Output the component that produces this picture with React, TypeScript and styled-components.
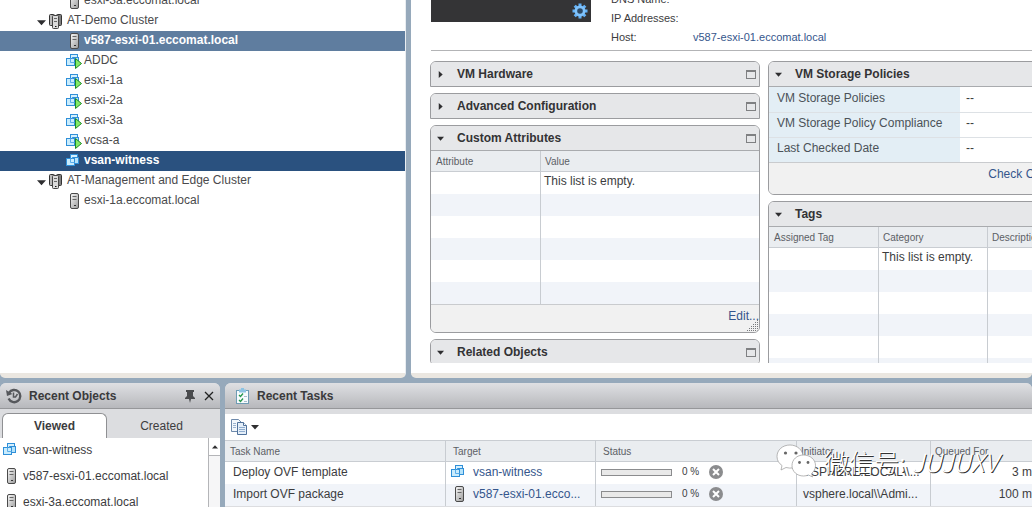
import React from "react";
import styled, { createGlobalStyle, css } from "styled-components";

const GlobalStyle = createGlobalStyle`
  *, *::before, *::after { box-sizing: border-box; }
  body {
    margin: 0;
    background: #96a9bb;
    color: #3c3c3e;
    font-family: "Liberation Sans", Arial, sans-serif;
    font-size: 12px;
    line-height: 20px;
  }
  button { font: inherit; color: inherit; background: none; border: 0; padding: 0; margin: 0; }
  ul, dl, dd, h2 { margin: 0; padding: 0; list-style: none; }
  h2 { font: inherit; }
  a { color: #35568c; text-decoration: none; }
`;

/* ---------- icons ---------- */

const HostIcon = () => (
  <svg width="16" height="16" viewBox="0 0 16 16" aria-hidden="true">
    <defs>
      <linearGradient id="hostBody" x1="0" x2="1" y1="0" y2="1">
        <stop offset="0" stopColor="#fafafa" />
        <stop offset="1" stopColor="#9a9a9a" />
      </linearGradient>
    </defs>
    <rect x="4.5" y="0.5" width="8" height="15" rx="1.5" fill="url(#hostBody)" stroke="#4a4a4a" />
    <path d="M6.500 3.500h4M6.500 6.500h4" stroke="#666" />
    <path d="M8 12.500h2" stroke="#333" />
  </svg>
);

const ClusterIcon = () => (
  <svg width="16" height="16" viewBox="0 0 16 16" aria-hidden="true">
    <rect x="0.5" y="1.5" width="5" height="11" rx="1" fill="#b9b9b9" stroke="#333" />
    <rect x="7.5" y="1.5" width="5" height="11" rx="1" fill="#808080" stroke="#333" />
    <rect x="3.5" y="2.5" width="6" height="13" rx="1" fill="#dadada" stroke="#444" />
    <path d="M5 5.500h3M5 8.500h3" stroke="#666" />
    <path d="M6 13.500h1.500" stroke="#111" />
  </svg>
);

const VmIcon = ({ running = false }: { running?: boolean }) => (
  <svg width="16" height="16" viewBox="0 0 16 16" aria-hidden="true">
    <rect x="4.5" y="1.5" width="7" height="8" fill="#d4effd" stroke="#2f8fd8" />
    <rect x="6.500" y="4.5" width="6" height="6" fill="#b4e2fa" stroke="#2f8fd8" />
    <rect x="0.5" y="5.5" width="8" height="7" fill="#c9ecfd" stroke="#2f8fd8" />
    <path d="M4.500 5.500v4h4M6.500 5.500v-1" fill="none" stroke="#5badea" />
    {running && <path d="M9.500 5.500v10l6-5z" fill="#83ea66" stroke="#1d8a26" strokeLinejoin="round" />}
  </svg>
);

const GearIcon = () => (
  <svg width="16" height="16" viewBox="0 0 16 16" aria-hidden="true">
    <g stroke="#63b1f7" strokeWidth="3">
      <path d="M8 0.5v15M0.5 8h15M2.7 2.7l10.6 10.6M13.3 2.7L2.7 13.3" />
    </g>
    <circle cx="8" cy="8" r="5.5" fill="#7fc2fb" />
    <circle cx="8" cy="8" r="2.8" fill="#2d4965" />
  </svg>
);

const HistoryIcon = () => (
  <svg width="16" height="16" viewBox="0 0 16 16" fill="none" stroke="#56585c" aria-hidden="true">
    <path d="M3 4.8A6.1 6.1 0 1 1 2.6 10.6" strokeWidth="2.4" />
    <path d="M0 2l1 6 5.5-2z" fill="#56585c" stroke="none" />
    <path d="M7.500 4.500v4.500h2l2-3" strokeWidth="1.5" />
  </svg>
);

const PinIcon = () => (
  <svg width="10" height="14" viewBox="0 0 10 14" aria-hidden="true">
    <path d="M1 1h8v2H8v4l2 2v1H6l-1 4-1-4H0V9l2-2V3H1z" fill="#4a4b4e" />
  </svg>
);

const CloseIcon = () => (
  <svg width="10" height="10" viewBox="0 0 10 10" aria-hidden="true">
    <path d="M1 1l8 8M9 1L1 9" stroke="#222" strokeWidth="1.3" />
  </svg>
);

const TasksIcon = () => (
  <svg width="14" height="16" viewBox="0 0 14 16" aria-hidden="true">
    <rect x="0.5" y="2.5" width="12" height="13" fill="#f7fbfd" stroke="#6f9cb4" />
    <path d="M3 4.500h7v-3H8V0H5v1.500H3z" fill="#8dc3e2" />
    <path d="M3 7l1.500 1.500L7 5.500M3 12l1.500 1.500L7 10.500" fill="none" stroke="#23974a" strokeWidth="1.300" />
    <path d="M8 8.500h3M8 13.500h3" stroke="#a9bccb" />
  </svg>
);

const CopyIcon = () => (
  <svg width="17" height="16" viewBox="0 0 17 16" aria-hidden="true">
    <path d="M0.500 0.500h7l3 3v9h-10z" fill="#f2f7fc" stroke="#6d89ab" />
    <path d="M2 4.500h3M2 6.500h3M2 8.500h3" stroke="#9bb3cf" />
    <path d="M6.500 3.500h6l3 3v9h-9z" fill="#e4eef8" stroke="#4f719b" />
    <path d="M12.500 3.500v3h3" fill="#fff" stroke="#4f719b" />
    <path d="M8 8.500h6M8 10.500h6M8 12.500h6" stroke="#8facce" />
  </svg>
);

const CancelIcon = () => (
  <svg width="14" height="14" viewBox="0 0 14 14" aria-hidden="true">
    <circle cx="7" cy="7" r="7" fill="#8b8c8e" />
    <path d="M4 4l6 6M10 4l-6 6" stroke="#fff" strokeWidth="2" />
  </svg>
);

const Arrow = ({ dir, size = 7 }: { dir: "down" | "right" | "up"; size?: number }) => {
  const shapes = { down: "M0 2h8L4 6.500z", right: "M2 0v8L6.500 4z", up: "M0 6h8L4 1.500z" };
  return (
    <svg width={size} height={size} viewBox="0 0 8 8" aria-hidden="true">
      <path d={shapes[dir]} fill="#2e2e30" />
    </svg>
  );
};

const ResizeGrip = () => (
  <svg width="12" height="12" viewBox="0 0 12 12" aria-hidden="true">
    <g stroke="#77797c" strokeDasharray="1 1">
      <path d="M10 1.500h2M8 3.500h4M6 5.500h6M4 7.500h8M2 9.500h10M0 11.500h12" />
    </g>
  </svg>
);

/* ---------- frame ---------- */

const Shell = styled.div`
  display: flex;
  flex-direction: column;
  gap: 5px;
  height: 100vh;
  overflow: hidden;
`;

const Workspace = styled.div`
  flex: 1;
  min-height: 0;
  display: flex;
  gap: 5px;
`;

const pane = css`
  background: #fff;
  border-bottom: 5px solid #ebe7e1;
  border-radius: 0 0 5px 5px;
  overflow: hidden;
`;

const Navigator = styled.nav`
  ${pane}
  flex: 0 0 406px;
  border-right: 1px solid #e9edf1;
`;

/* The tree is scrolled, so its first row is partly out of view. */
const Tree = styled.ul`
  margin-top: -9px;
`;

const TreeRow = styled.li<{ $depth: number; $tone?: "related" | "selected" }>`
  display: flex;
  align-items: center;
  height: 20px;
  gap: 2px;
  padding-left: ${(p) => (p.$depth === 1 ? 37 : 66)}px;
  color: #4a4a4c;
  ${(p) =>
    p.$tone &&
    css`
      color: #fff;
      font-weight: bold;
      background: ${p.$tone === "selected" ? "#2a517f" : "#5f7d9f"};
    `}
`;

const Twisty = styled.button`
  display: flex;
  width: 10px;
  padding-top: 3px;
`;

const NodeName = styled.span`
  padding-bottom: 2px;
`;

const Main = styled.main`
  ${pane}
  flex: 1;
  min-width: 0;
  padding: 0 0 10px 19px;
  display: flex;
`;

const MainScroll = styled.div`
  flex: 1;
  min-width: 0;
  overflow: hidden;
`;

const Summary = styled.section`
  display: flex;
  gap: 20px;
  margin: -11px 0 10px 1px;
  padding-bottom: 4px;
  border-bottom: 1px solid #b3b4b6;
  font-size: 11px;
`;

const Console = styled.div`
  display: flex;
  align-items: flex-end;
  justify-content: flex-end;
  width: 160px;
  height: 33px;
  padding: 3px;
  background: #343436;
`;

const Facts = styled.dl`
  display: grid;
  grid-template-columns: 82px auto;
  grid-auto-rows: 19px;
  line-height: 20px;
`;

const Columns = styled.div`
  display: grid;
  grid-template-columns: repeat(2, minmax(330px, 1fr));
  align-items: start;
  gap: 8px;
`;

const Column = styled.div`
  display: flex;
  flex-direction: column;
  gap: 6px;
`;

/* ---------- portlets ---------- */

const Card = styled.section<{ $open: boolean }>`
  border: 1px solid #9b9c9f;
  border-radius: ${(p) => (p.$open ? "6px" : "6px 6px 0 0")};
  overflow: hidden;
  background: #fff;
`;

const CardHead = styled.h2<{ $open: boolean }>`
  display: flex;
  align-items: center;
  justify-content: space-between;
  height: ${(p) => (p.$open ? 25 : 24)}px;
  padding: 0 3px 0 6px;
  background: #e6e7e9;
  border-bottom: ${(p) => (p.$open ? "1px solid #a9abae" : "0")};
`;

const Toggle = styled.button`
  display: flex;
  align-items: center;
  gap: 13px;
  color: #333335;
  font-weight: bold;
`;

const Maximize = styled.button`
  width: 10px;
  height: 9px;
  border: 1px solid #7f8082;
  border-top-width: 2px;
`;

const CardFoot = styled.footer<{ $tall?: boolean }>`
  display: flex;
  justify-content: flex-end;
  position: relative;
  height: ${(p) => (p.$tall ? 32 : 28)}px;
  padding: 1px ${(p) => (p.$tall ? 8 : 0)}px 0;
  background: #f1f1f1;
  border-top: 1px solid #c9cbce;
`;

const Grip = styled.span`
  position: absolute;
  right: 0;
  bottom: 1px;
  line-height: 0;
`;

const Grid = styled.table`
  width: 100%;
  table-layout: fixed;
  border-collapse: separate;
  border-spacing: 0;

  th {
    height: 21px;
    padding: 2px 5px 0;
    font-size: 10px;
    font-weight: normal;
    line-height: 18px;
    text-align: left;
    color: #5c6065;
    background: #eaedf0;
    border-bottom: 1px solid #c9cdd2;
    overflow: hidden;
  }
  td {
    height: 22px;
    padding: 0 3px 4px;
    line-height: 18px;
    white-space: nowrap;
  }
  th + th, td + td { border-left: 1px solid #c8ccd1; }
  th + th { padding-left: 4px; }
  tbody tr:nth-child(even) { background: #f1f4f9; }
`;

const Policies = styled.table`
  width: 100%;
  border-collapse: collapse;

  tr + tr { border-top: 1px solid #dde1e5; }
  th {
    width: 191px;
    height: 25px;
    padding: 0 8px 3px;
    text-align: left;
    font-weight: normal;
    color: #4b5258;
    background: #e3eef5;
  }
  td { padding: 0 6px 3px; }
`;

const Portlet = ({ title, open = false, children }: { title: string; open?: boolean; children?: React.ReactNode }) => (
  <Card $open={open}>
    <CardHead $open={open}>
      <Toggle type="button" aria-expanded={open}>
        <Arrow dir={open ? "down" : "right"} />
        {title}
      </Toggle>
      <Maximize type="button" aria-label={`Maximize ${title}`} />
    </CardHead>
    {children}
  </Card>
);

const EmptyGrid = ({ columns, rows }: { columns: string[]; rows: number }) => (
  <Grid>
    <colgroup>
      {columns.map((c, i) => (
        <col key={c} width={i < columns.length - 1 ? 109 : undefined} />
      ))}
    </colgroup>
    <thead>
      <tr>{columns.map((c) => <th key={c}>{c}</th>)}</tr>
    </thead>
    <tbody>
      {Array.from({ length: rows }, (_, r) => (
        <tr key={r}>
          {columns.map((c, i) => <td key={c}>{r === 0 && i === 1 ? "This list is empty." : ""}</td>)}
        </tr>
      ))}
    </tbody>
  </Grid>
);

/* ---------- bottom dock ---------- */

const Dock = styled.div`
  flex: 0 0 124px;
  min-height: 0;
  display: flex;
  gap: 5px;
`;

const DockPanel = styled.section<{ $width?: number }>`
  flex: ${(p) => (p.$width ? `0 0 ${p.$width}px` : "1")};
  min-width: 0;
  display: flex;
  flex-direction: column;
  background: #dcdde0;
  border-radius: 6px 6px 0 0;
  overflow: hidden;
`;

const DockHead = styled.header<{ $inset: number }>`
  flex: none;
  display: flex;
  align-items: center;
  gap: 7px;
  height: 26px;
  padding: 0 6px 0 ${(p) => p.$inset}px;
  background: linear-gradient(#dfe0e3, #b7b8bc);
  border-bottom: 1px solid #96979a;

  h2 { flex: 1; font-weight: bold; color: #3a3a3c; }
  button { display: flex; margin-left: 2px; }
`;

const Tabs = styled.div`
  flex: none;
  display: flex;
  padding: 4px 0 0 2px;
`;

const Tab = styled.button<{ $active?: boolean }>`
  width: ${(p) => (p.$active ? 105 : 109)}px;
  height: 25px;
  ${(p) =>
    p.$active &&
    css`
      font-weight: bold;
      background: #fff;
      border: 1px solid #8f9093;
      border-bottom: 0;
      border-radius: 6px 6px 0 0;
    `}
`;

const ListArea = styled.div`
  flex: 1;
  min-height: 0;
  display: flex;
  overflow: hidden;
  background: #fff;
`;

const ObjectList = styled.ul`
  flex: 1;
  min-width: 0;

  li {
    display: flex;
    align-items: center;
    gap: 4px;
    height: 26px;
    padding: 0 3px 2px;
  }
`;

const ScrollTrack = styled.div`
  width: 12px;
  border-left: 1px solid #b4b5b8;
  background: #f6f6f7;
`;

const ScrollUp = styled.button`
  display: flex;
  align-items: center;
  justify-content: center;
  width: 11px;
  height: 18px;
  background: #fff;
  border-bottom: 1px solid #b4b5b8;
`;

const Toolbar = styled.div`
  flex: none;
  display: flex;
  align-items: center;
  height: 27px;
  margin-top: 5px;
  padding: 0 6px;
  background: #fff;
  border-bottom: 1px solid #c9cdd2;

  button { display: flex; align-items: center; gap: 3px; }
`;

const TaskGrid = styled(Grid)`
  min-width: 820px;
  background: #fff;

  td { padding: 0 8px 2px; }
  th:nth-child(2), th:nth-child(3) { padding-left: 7px; }
  td:nth-child(2), td:nth-child(3) { padding-left: 5px; }
  td:nth-child(4) { padding-left: 6px; }
  td:last-child { text-align: right; padding-right: 7px; }
`;

const Target = styled.div`
  display: flex;
  align-items: center;
  gap: 6px;
`;

const Status = styled.div`
  display: flex;
  align-items: center;
  gap: 10px;
  font-size: 10px;

  progress {
    appearance: none;
    width: 71px;
    height: 7px;
    border: 1px solid #8b8c8e;
    background: #e9e9e9;
  }
  progress::-webkit-progress-bar { background: #e9e9e9; }
  button { display: flex; }
`;

/* ---------- watermark ---------- */

const Watermark = styled.div`
  position: absolute;
  right: 34px;
  bottom: 28px;
  display: flex;
  align-items: center;
  gap: 8px;
  color: #fff;
  font: 25px/36px "Noto Sans CJK SC", sans-serif;
  font-weight: 300;
  text-shadow: 1px 1px 0 #333;
  white-space: nowrap;
  pointer-events: none;
`;

const ChatLogo = () => (
  <svg width="40" height="34" viewBox="0 0 40 34" aria-hidden="true">
    <g fill="#fff" stroke="#999" strokeWidth="0.700">
      <path d="M14 1C6.500 1 1 6 1 12.500c0 4 2 7 5 9L5 26l5-2.500c10 2.500 17-3 17-11C27 6 21 1 14 1z" />
      <path d="M27.500 11C21 11 16 15.500 16 21.500S21 32 27.500 32c2 0 3.500-.400 5-1l4 2-1-3.500c2.500-2 4-4.500 4-8C39.500 15.500 34 11 27.500 11z" />
    </g>
    <g fill="#666">
      <circle cx="9.500" cy="9" r="1.600" />
      <circle cx="20" cy="9" r="1.600" />
      <circle cx="23.500" cy="18.500" r="1.400" />
      <circle cx="32" cy="18.500" r="1.400" />
    </g>
  </svg>
);

/* ---------- data ---------- */

type Node = { name: string; kind: "host" | "vm" | "running" | "cluster"; tone?: "related" | "selected" };

const inventory: Node[] = [
  { name: "esxi-3a.eccomat.local", kind: "host" },
  { name: "AT-Demo Cluster", kind: "cluster" },
  { name: "v587-esxi-01.eccomat.local", kind: "host", tone: "related" },
  { name: "ADDC", kind: "running" },
  { name: "esxi-1a", kind: "running" },
  { name: "esxi-2a", kind: "running" },
  { name: "esxi-3a", kind: "running" },
  { name: "vcsa-a", kind: "running" },
  { name: "vsan-witness", kind: "vm", tone: "selected" },
  { name: "AT-Management and Edge Cluster", kind: "cluster" },
  { name: "esxi-1a.eccomat.local", kind: "host" },
];

const recent: Node[] = [
  { name: "vsan-witness", kind: "vm" },
  { name: "v587-esxi-01.eccomat.local", kind: "host" },
  { name: "esxi-3a.eccomat.local", kind: "host" },
];

const tasks = [
  { name: "Deploy OVF template", target: "vsan-witness", kind: "vm", by: "VSPHERE.LOCAL\\\\...", queued: "3 ms" },
  { name: "Import OVF package", target: "v587-esxi-01.ecco...", kind: "host", by: "vsphere.local\\\\Admi...", queued: "100 ms" },
] as const;

const NodeIcon = ({ kind }: { kind: Node["kind"] }) => {
  if (kind === "cluster") return <ClusterIcon />;
  if (kind === "host") return <HostIcon />;
  return <VmIcon running={kind === "running"} />;
};

export default function App() {
  return (
    <Shell>
      <GlobalStyle />
      <Workspace>
        <Navigator aria-label="Inventory">
          <Tree>
            {inventory.map((n, i) => (
              <TreeRow key={i} $depth={n.kind === "cluster" ? 1 : 2} $tone={n.tone}>
                {n.kind === "cluster" && (
                  <Twisty type="button" aria-expanded="true" aria-label={`Collapse ${n.name}`}>
                    <Arrow dir="down" size={9} />
                  </Twisty>
                )}
                <NodeIcon kind={n.kind} />
                <NodeName>{n.name}</NodeName>
              </TreeRow>
            ))}
          </Tree>
        </Navigator>

        <Main>
          <MainScroll>
            <Summary>
              <Console><GearIcon /></Console>
              <Facts>
                <dt>DNS Name:</dt><dd />
                <dt>IP Addresses:</dt><dd />
                <dt>Host:</dt><dd><a href="#host">v587-esxi-01.eccomat.local</a></dd>
              </Facts>
            </Summary>
            <Columns>
              <Column>
                <Portlet title="VM Hardware" />
                <Portlet title="Advanced Configuration" />
                <Portlet title="Custom Attributes" open>
                  <EmptyGrid columns={["Attribute", "Value"]} rows={6} />
                  <CardFoot>
                    <a href="#edit">Edit...</a>
                    <Grip><ResizeGrip /></Grip>
                  </CardFoot>
                </Portlet>
                <Portlet title="Related Objects" open />
              </Column>
              <Column>
                <Portlet title="VM Storage Policies" open>
                  <Policies>
                    <tbody>
                      <tr><th scope="row">VM Storage Policies</th><td>--</td></tr>
                      <tr><th scope="row">VM Storage Policy Compliance</th><td>--</td></tr>
                      <tr><th scope="row">Last Checked Date</th><td>--</td></tr>
                    </tbody>
                  </Policies>
                  <CardFoot $tall><a href="#check">Check Compliance</a></CardFoot>
                </Portlet>
                <Portlet title="Tags" open>
                  <EmptyGrid columns={["Assigned Tag", "Category", "Description"]} rows={6} />
                </Portlet>
              </Column>
            </Columns>
          </MainScroll>
        </Main>
      </Workspace>

      <Dock>
        <DockPanel $width={220}>
          <DockHead $inset={6}>
            <HistoryIcon />
            <h2>Recent Objects</h2>
            <button type="button" aria-label="Pin"><PinIcon /></button>
            <button type="button" aria-label="Close"><CloseIcon /></button>
          </DockHead>
          <Tabs role="tablist">
            <Tab type="button" role="tab" aria-selected="true" $active>Viewed</Tab>
            <Tab type="button" role="tab" aria-selected="false">Created</Tab>
          </Tabs>
          <ListArea>
            <ObjectList>
              {recent.map((n) => (
                <li key={n.name}><NodeIcon kind={n.kind} />{n.name}</li>
              ))}
            </ObjectList>
            <ScrollTrack>
              <ScrollUp type="button" aria-label="Scroll up"><Arrow dir="up" size={6} /></ScrollUp>
            </ScrollTrack>
          </ListArea>
        </DockPanel>

        <DockPanel>
          <DockHead $inset={11}>
            <TasksIcon />
            <h2>Recent Tasks</h2>
          </DockHead>
          <Toolbar>
            <button type="button" aria-label="Copy"><CopyIcon /><Arrow dir="down" size={8} /></button>
          </Toolbar>
          <TaskGrid>
            <colgroup>
              <col width="220" /><col width="150" /><col width="201" /><col width="134" /><col />
            </colgroup>
            <thead>
              <tr><th>Task Name</th><th>Target</th><th>Status</th><th>Initiator</th><th>Queued For</th></tr>
            </thead>
            <tbody>
              {tasks.map((t) => (
                <tr key={t.name}>
                  <td>{t.name}</td>
                  <td><Target><NodeIcon kind={t.kind} /><a href="#target">{t.target}</a></Target></td>
                  <td>
                    <Status>
                      <progress value={0} max={100} aria-label={`${t.name} progress`} />
                      0 %
                      <button type="button" aria-label={`Cancel ${t.name}`}><CancelIcon /></button>
                    </Status>
                  </td>
                  <td>{t.by}</td>
                  <td>{t.queued}</td>
                </tr>
              ))}
            </tbody>
          </TaskGrid>
        </DockPanel>
      </Dock>

      <Watermark>
        <ChatLogo />
        <span>微信号: <i>JUJUXV</i></span>
      </Watermark>
    </Shell>
  );
}
